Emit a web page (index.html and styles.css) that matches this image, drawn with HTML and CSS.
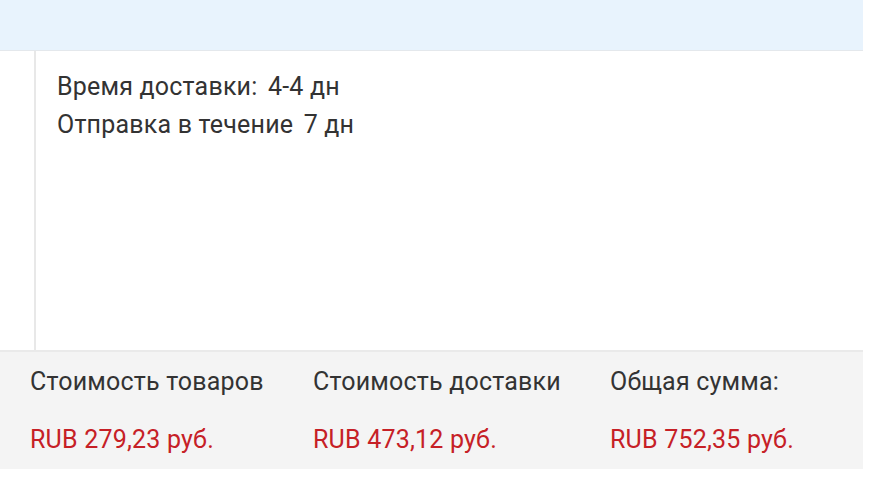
FILE: index.html
```html
<!DOCTYPE html>
<html lang="ru">
<head>
<meta charset="utf-8">
<link rel="stylesheet" href="styles.css">
</head>
<body>
<div class="page">
  <div class="header"></div>
  <div class="content">
    <div class="side"></div>
    <div class="info">
      <div class="line"><span>Время доставки:</span> <span class="val">4-4 дн</span></div>
      <div class="line"><span>Отправка в течение</span> <span class="val">7 дн</span></div>
    </div>
  </div>
  <div class="summary">
    <div class="col c1">
      <div class="label">Стоимость товаров</div>
      <div class="price">RUB 279,23 руб.</div>
    </div>
    <div class="col c2">
      <div class="label">Стоимость доставки</div>
      <div class="price">RUB 473,12 руб.</div>
    </div>
    <div class="col c3">
      <div class="label">Общая сумма:</div>
      <div class="price">RUB 752,35 руб.</div>
    </div>
  </div>
</div>
</body>
</html>
```

FILE: styles.css
```css
html, body {
  margin: 0;
  padding: 0;
  background: #ffffff;
}
body {
  font-family: Roboto, "Noto Sans", sans-serif;
  color: #333333;
  letter-spacing: 0.2px;
}
.page {
  width: 863px;
}
.header {
  height: 50px;
  background: #e8f3fd;
  border-bottom: 1px solid #e4e8ec;
}
.content {
  display: flex;
  height: 299px;
}
.side {
  width: 34px;
  border-right: 2px solid #e8e8e8;
}
.info {
  padding: 17px 0 0 21px;
  font-size: 25px;
  line-height: 38px;
}
.val {
  margin-left: 4px;
}
.summary {
  display: flex;
  height: 117px;
  background: #f4f4f4;
  border-top: 2px solid #eaeaea;
  font-size: 25px;
}
.col {
  padding-top: 15px;
}
.c1 { padding-left: 30px; width: 283px; }
.c2 { width: 297px; }
.label {
  line-height: 30px;
  color: #333333;
}
.price {
  margin-top: 28px;
  line-height: 30px;
  color: #c62026;
}
```
